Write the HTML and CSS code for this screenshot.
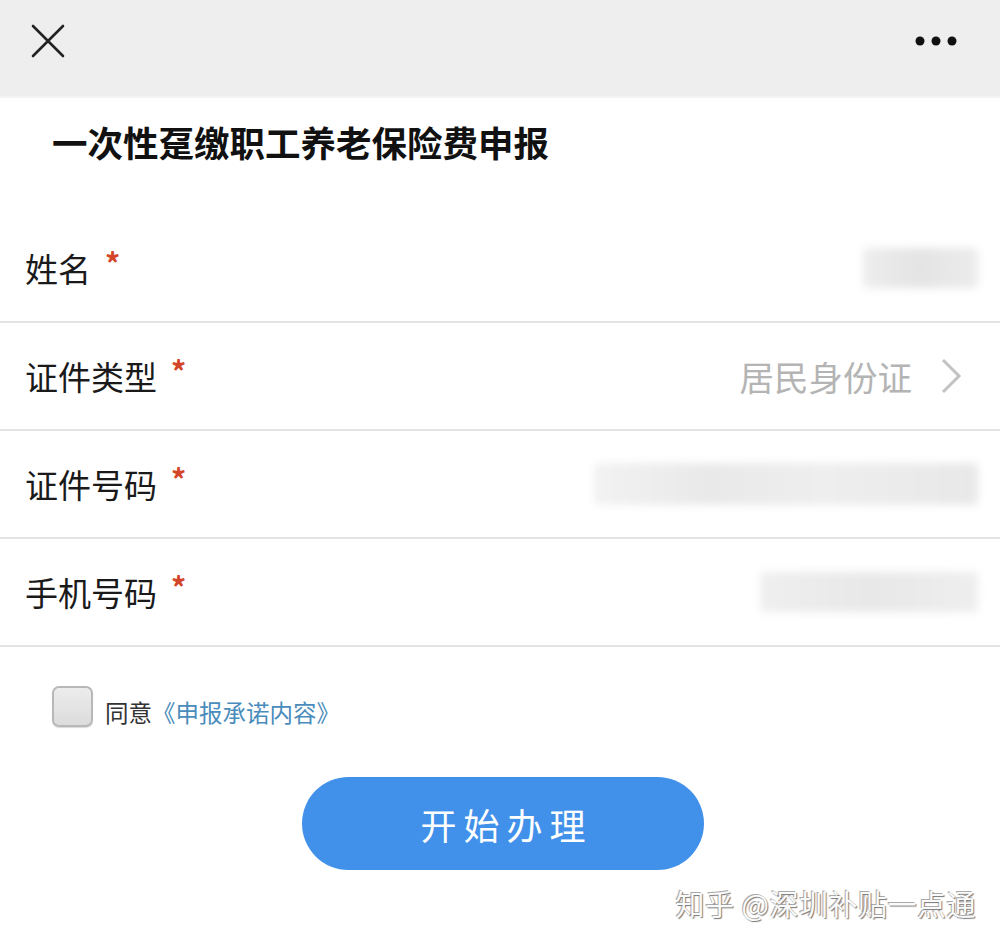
FILE: index.html
```html
<!DOCTYPE html>
<html lang="zh">
<head>
<meta charset="utf-8">
<link rel="stylesheet" href="styles.css">
</head>
<body>
<div class="page">
  <header class="topbar">
    <svg class="close" width="36" height="36" viewBox="0 0 36 36"><path d="M3 3 L33 33 M33 3 L3 33" stroke="#222" stroke-width="2.6" stroke-linecap="round"/></svg>
    <svg class="more" width="44" height="12" viewBox="0 0 44 12"><circle cx="6" cy="6" r="4.5" fill="#111"/><circle cx="22" cy="6" r="4.5" fill="#111"/><circle cx="38" cy="6" r="4.5" fill="#111"/></svg>
  </header>
  <h1 class="title">一次性趸缴职工养老保险费申报</h1>
  <div class="form">
    <div class="row">
      <span class="label">姓名</span><span class="star">*</span>
      <span class="value"><span class="blur b1"></span></span>
    </div>
    <div class="row">
      <span class="label">证件类型</span><span class="star">*</span>
      <span class="value"><span class="select">居民身份证</span>
        <svg class="chev" width="22" height="36" viewBox="0 0 22 36"><path d="M3 2 L19 18 L3 34" fill="none" stroke="#c2c2c2" stroke-width="3"/></svg>
      </span>
    </div>
    <div class="row">
      <span class="label">证件号码</span><span class="star">*</span>
      <span class="value"><span class="blur b3"></span></span>
    </div>
    <div class="row">
      <span class="label">手机号码</span><span class="star">*</span>
      <span class="value"><span class="blur b4"></span></span>
    </div>
  </div>
  <div class="agree">
    <div class="agree-line">
      <span class="checkbox"></span>
      <span class="agree-text">同意<span class="link">《申报承诺内容》</span></span>
    </div>
  </div>
  <div class="actions">
    <button class="btn">开始办理</button>
  </div>
  <div class="watermark">知乎 @深圳补贴一点通</div>
</div>
</body>
</html>
```
FILE: styles.css
```css
* { box-sizing: border-box; }
html, body { margin: 0; padding: 0; background: #fff; }
body { font-family: "Noto Sans CJK SC", "Noto Sans", sans-serif; width: 1000px; height: 940px; overflow: hidden; }
.page { width: 1000px; }
.topbar {
  height: 98px; background: #eeeeee;
  display: flex; align-items: center; justify-content: space-between;
  padding: 0 42px 0 30px;
  border-bottom: 2px solid #f4f4f4;
}
.close { margin-top: -14px; }
.more { margin-top: -14px; }
.title {
  margin: 0; padding: 19px 0 0 52px; height: 117px;
  font-size: 35.5px; font-weight: 700; color: #111; line-height: 50px;
}
.row {
  height: 108px; display: flex; align-items: center;
  border-bottom: 2px solid #e4e4e4; padding: 0 22px 0 25px;
}
.label { font-size: 33px; color: #1a1a1a; line-height: 40px; }
.star { color: #d4462a; font-size: 30px; margin-left: 14px; margin-top: -12px; font-weight: 700; }
.value { margin-left: auto; display: flex; align-items: center; }
.select { font-size: 34.5px; color: #b4b4b4; margin-right: 28px; }
.chev { margin-right: 16px; }
.blur { display: block; background: #ececec; filter: blur(4px); border-radius: 4px; }
.b1 { width: 115px; height: 40px; background: linear-gradient(90deg,#ededed,#e4e4e4 50%,#ececec); }
.b3 { width: 384px; height: 42px; background: linear-gradient(90deg,#f2f2f2,#e9e9e9 30%,#eeeeee 60%,#e8e8e8); }
.b4 { width: 218px; height: 40px; background: linear-gradient(90deg,#efefef,#e8e8e8 50%,#eeeeee); }
.agree { padding: 39px 0 0 52px; height: 130px; }
.agree-line { display: flex; align-items: center; height: 41px; }
.checkbox {
  width: 41px; height: 41px; border-radius: 7px;
  background: linear-gradient(#ececec,#dcdcdc); border: 2px solid #b8b8b8;
  box-shadow: 0 1px 1px rgba(0,0,0,0.15);
}
.agree-text { font-size: 23.5px; color: #333; margin-left: 12px; margin-top: 10px; }
.link { color: #4a8cbc; }
.actions { display: flex; padding-left: 302px; }
.btn {
  width: 402px; height: 93px; border: none; border-radius: 47px;
  background: #4191ea; color: #fff; font-family: inherit;
  font-size: 36px; letter-spacing: 7px; text-indent: 7px;
}
.watermark {
  text-align: right; padding: 12px 24px 0 0;
  font-size: 29px; color: #fafafa; letter-spacing: 0.5px;
  text-shadow: 1px 1px 1px #777, -1px -1px 0 #aaa;
}
```
